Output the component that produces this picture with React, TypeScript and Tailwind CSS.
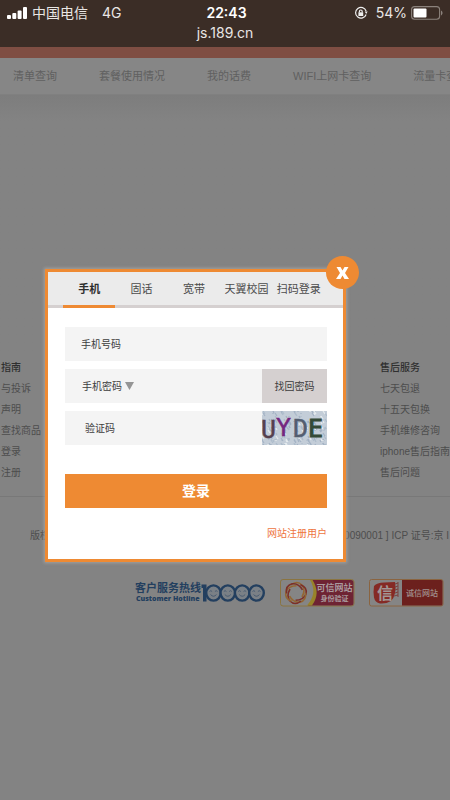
import React from "react";

const navItems = ["清单查询", "套餐使用情况", "我的话费", "WIFI上网卡查询", "流量卡查询"];
const tabs = ["手机", "固话", "宽带", "天翼校园", "扫码登录"];
const guideLinks = ["与投诉", "声明", "查找商品", "登录", "注册"];
const serviceLinks = ["七天包退", "十五天包换", "手机维修咨询", "iphone售后指南", "售后问题"];

function StatusBar() {
  return (
    <header className="h-[47px] bg-[#3b2d26] text-[#e9e6e4]">
      <div className="grid h-[25px] grid-cols-[1fr_auto_1fr] items-center pl-[7px] pr-[7px]">
        <div className="flex items-center text-[14px]">
          <svg width="20" height="12" viewBox="0 0 20 12" fill="#fff" className="mr-[5px]" aria-label="信号">
            <rect x="0" y="8" width="4" height="4" rx="1" />
            <rect x="5.3" y="6" width="4" height="6" rx="1" />
            <rect x="10.6" y="3.4" width="4" height="8.6" rx="1" />
            <rect x="16" y="0" width="4" height="12" rx="1" />
          </svg>
          <span>中国电信</span>
          <span className="ml-[14px]">4G</span>
        </div>
        <div className="pl-[3px] text-[14px] font-semibold text-white">22:43</div>
        <div className="flex items-center justify-end text-[14px]">
          <svg width="14" height="14" viewBox="0 0 14 14" fill="none" stroke="#eee" strokeWidth="1.2" className="mr-[8px]" aria-label="方向锁定">
            <path d="M12.1 8.5A5.4 5.4 0 1 1 12.1 5" />
            <path d="M10.7 5.6h3l-1.5 2.3z" fill="#eee" stroke="none" />
            <rect x="4.4" y="6.3" width="4.8" height="3.7" fill="#eee" stroke="none" />
            <path d="M5.4 6.5V5.4a1.4 1.4 0 0 1 2.8 0v1.1" />
          </svg>
          <span>54%</span>
          <svg width="32" height="14" viewBox="0 0 32 14" className="ml-[4px]" aria-label="电量">
            <rect x="0.6" y="0.6" width="28" height="12.6" rx="3" fill="none" stroke="#8b827c" strokeWidth="1.1" />
            <rect x="2.5" y="2.5" width="13" height="9" rx="1" fill="#fff" />
            <path d="M30 4.6c2 .8 2 4 0 4.8z" fill="#8b827c" />
          </svg>
        </div>
      </div>
      <div className="text-center text-[14px] leading-[15px]">js.189.cn</div>
    </header>
  );
}

function LinkColumn({ title, links }: { title: string; links: string[] }) {
  return (
    <div className="whitespace-nowrap text-[10px] leading-[21px]">
      <h3 className="font-medium text-[#2f2f2f]">{title}</h3>
      <ul>
        {links.map((l) => (
          <li key={l}>
            <a href="#">{l}</a>
          </li>
        ))}
      </ul>
    </div>
  );
}

function Hotline() {
  return (
    <svg width="131" height="26" viewBox="0 -2 131 26" fill="#233f5f" role="img" aria-label="客户服务热线 10000">
      <text x="0" y="10" fontSize="11" fontWeight="700">客户服务热线</text>
      <text x="1" y="19" fontSize="7" fontWeight="800" fontFamily="'Open Sans', sans-serif">Customer Hotline</text>
      <path d="M66.500 2.500h5v17h-3.500V6h-1.500z" />
      {[78.5, 92.8, 107.2, 121.5].map((x) => (
        <g key={x}>
          <ellipse cx={x} cy="11" rx="7.3" ry="7.6" fill="#7a8086" stroke="#233f5f" strokeWidth="2.400" />
          <path d={`M${x - 4} 9.500q1.300-1.600 2.600 0M${x + 1.4} 9.500q1.300-1.600 2.600 0M${x - 3} 12.500q3 3.500 6 0`} fill="none" stroke="#3d536c" strokeWidth="0.800" />
        </g>
      ))}
    </svg>
  );
}

function TrustedBadge() {
  return (
    <svg width="75" height="28" viewBox="0 0 75 28" role="img" aria-label="可信网站 身份验证">
      <rect x="0.5" y="0.5" width="73.5" height="26.5" rx="2.5" fill="#858585" stroke="#8a7440" />
      <path d="M32 1h39q2.5 0 2.5 2.5V24q0 2.5-2.5 2.5H28Q39 15 32 1z" fill="#6e2333" />
      <path d="M30 1h2.5Q41 14 32 26.5H27Q38 14 30 1z" fill="#988329" />
      <g fill="none" strokeWidth="1.6">
        {[0, 60, 120, 180, 240, 300].map((a) => (
          <path key={a} d="M11 6Q17 1 22 6Q26 11 22 18" stroke={a % 120 ? "#7c3028" : "#936632"} transform={`rotate(${a} 16 14)`} />
        ))}
      </g>
      <g fill="#a99a9e" fontWeight="700">
        <text x="36.5" y="12" fontSize="9">可信网站</text>
        <text x="40.5" y="21.5" fontSize="7">身份验证</text>
      </g>
    </svg>
  );
}

function IntegrityBadge() {
  return (
    <svg width="75" height="28" viewBox="0 0 75 28" role="img" aria-label="诚信网站">
      <rect x="0.5" y="0.5" width="73.5" height="26.5" rx="2" fill="#858585" stroke="#8a6440" />
      <path d="M33 1h39q1.5 0 1.5 1.5V25q0 1.5-1.5 1.5H33z" fill="#6c201d" />
      <path d="M5 7Q8 3.5 15 3.5L26 3q1 6 0 11t-4 8q-5 3-11 2.5-5-1-6-6T5 7z" fill="#852a25" />
      <path d="M26 5l3-1M26 8l3-1M26 11l3-1M26 14l3-1M25 17l4-1M29 3v15" stroke="#793a35" strokeWidth="0.9" />
      <text x="8" y="20" fontSize="16" fontWeight="700" fill="#a19795">信</text>
      <text x="37" y="17" fontSize="8" fontWeight="500" fill="#a1908e">诚信网站</text>
    </svg>
  );
}

function Captcha() {
  const flecks = Array.from({ length: 220 }, (_, i) => ({
    x: (i * 47 + ((i * i) % 13)) % 65,
    y: (i * 29 + ((i * i * 3) % 17)) % 34,
    c: ["#e6ecef", "#a3b2c4", "#c0d0d9", "#d3d1de", "#adbccb"][(i * i) % 5],
    d: 1 + (i % 3),
  }));
  return (
    <svg width="65" height="34" viewBox="0 0 65 34" role="img" aria-label="UYDE">
      <rect width="65" height="34" fill="#c3cdd8" />
      {flecks.map((f, i) => (
        <path key={i} d={`M${f.x} ${f.y}l${f.d - 1} ${f.d}`} stroke={f.c} strokeWidth="1.2" />
      ))}
      <g fontSize="25" fontFamily="'DejaVu Sans Mono', monospace" strokeWidth="0.5">
        <text x="-1" y="27" fill="#55404e" stroke="#55404e">U</text>
        <text x="14" y="25" fill="#75267f" stroke="#75267f">Y</text>
        <text x="31" y="26" fill="#535d70" stroke="#535d70">D</text>
        <text x="46" y="26" fill="#344a37" stroke="#344a37" strokeWidth="1">E</text>
      </g>
    </svg>
  );
}

function LoginDialog() {
  return (
    <section role="dialog" aria-label="登录" className="relative w-[301px] border-[3px] border-[#ee8a33] bg-white pb-[15px] shadow-[0_0_3px_1px_#a3a19e]">
      <button type="button" aria-label="关闭" className="absolute -right-4 -top-4 flex size-[33px] items-center justify-center rounded-full bg-[#ee8a33]">
        <svg width="13" height="12" viewBox="0 0 13 12" fill="#fff" aria-hidden="true">
          <path d="M0.500 0h4l2 3.500L8.500 0h4L9 6l4 6H8.500l-2-3.500-2 3.500H0l4-6z" />
        </svg>
      </button>
      <div role="tablist" className="flex h-[36px] border-b-[3px] border-[#d5d0d0] bg-[#ebebeb] pl-[15px] pr-[18px] text-[11px] text-[#4b4b4b]">
        {tabs.map((t, i) => (
          <button
            key={t}
            type="button"
            role="tab"
            aria-selected={i === 0}
            className={
              i === 0
                ? "-mb-[3px] flex-1 whitespace-nowrap border-b-[3px] border-[#ee8a33] pt-[2px] font-bold text-[#2e2e2e]"
                : "flex-1 whitespace-nowrap pt-[2px]"
            }
          >
            {t}
          </button>
        ))}
      </div>
      <form className="flex flex-col gap-2 pl-[17px] pr-4 pt-[19px] text-[10px] text-[#3d3d3d]" onSubmit={(e) => e.preventDefault()}>
        <div className="flex h-[34px] items-center bg-[#f4f4f4] pl-4">
          <label htmlFor="phone">手机号码</label>
          <input id="phone" type="tel" className="h-full min-w-0 flex-1 px-2 outline-none" />
        </div>
        <div className="flex h-[34px] items-center bg-[#f4f4f4] pl-[17px]">
          <select aria-label="密码类型" className="w-[40px] appearance-none outline-none">
            <option>手机密码</option>
          </select>
          <svg width="9" height="8" viewBox="0 0 9 8" className="ml-[3px]" aria-hidden="true">
            <path d="M0 0h9L4.5 8z" fill="#959595" />
          </svg>
          <input aria-label="手机密码" type="password" className="h-full min-w-0 flex-1 px-2 outline-none" />
          <button type="button" className="h-full w-[65px] bg-[#d5d0d0]">找回密码</button>
        </div>
        <div className="flex h-[34px] items-center bg-[#f4f4f4] pl-5">
          <label htmlFor="code">验证码</label>
          <input id="code" type="text" className="h-full min-w-0 flex-1 px-2 outline-none" />
          <Captcha />
        </div>
        <button type="submit" className="mt-[21px] h-[34px] bg-[#ee8a33] text-[14px] font-bold text-white">登录</button>
        <a href="#" className="mt-2 self-end leading-[20px] text-[#ee7440]">网站注册用户</a>
      </form>
    </section>
  );
}

export default function App() {
  return (
    <div className="relative flex min-h-screen flex-col overflow-hidden bg-[#838383] font-['Liberation_Sans','Noto_Sans_CJK_SC',sans-serif] text-[#4d4d4d]">
      <div className="font-[Inter,'Noto_Sans_CJK_SC',sans-serif]">
        <StatusBar />
      </div>
      <div className="h-[11px] bg-[#7f4e43]" />
      <nav className="flex h-[37px] items-center gap-[42px] whitespace-nowrap border-b border-[#808080] bg-[#868686] pl-[13px] pt-px text-[11px] text-[#606060]">
        {navItems.map((n) => (
          <a key={n} href="#">{n}</a>
        ))}
      </nav>
      <main className="h-[262px] bg-linear-to-b from-[#7d7d7d] to-[#838383] to-10%" />
      <footer>
        <div className="flex justify-between border-b border-[#787878] pb-[13px] pl-px">
          <LinkColumn title="指南" links={guideLinks} />
          <LinkColumn title="售后服务" links={serviceLinks} />
        </div>
        <div className="flex justify-between whitespace-nowrap pl-[30px] pr-px pt-[30px] text-[10px] leading-[18px]">
          <span>版权</span>
          <span>20090001 ] ICP 证号:京 I</span>
        </div>
        <div className="flex items-center justify-end gap-[14px] pr-[6px] pt-[34px] font-['Noto_Sans_CJK_SC',sans-serif]">
          <Hotline />
          <TrustedBadge />
          <IntegrityBadge />
        </div>
      </footer>
      <div className="absolute inset-0 pl-[45px] pt-[269px]">
        <LoginDialog />
      </div>
    </div>
  );
}
